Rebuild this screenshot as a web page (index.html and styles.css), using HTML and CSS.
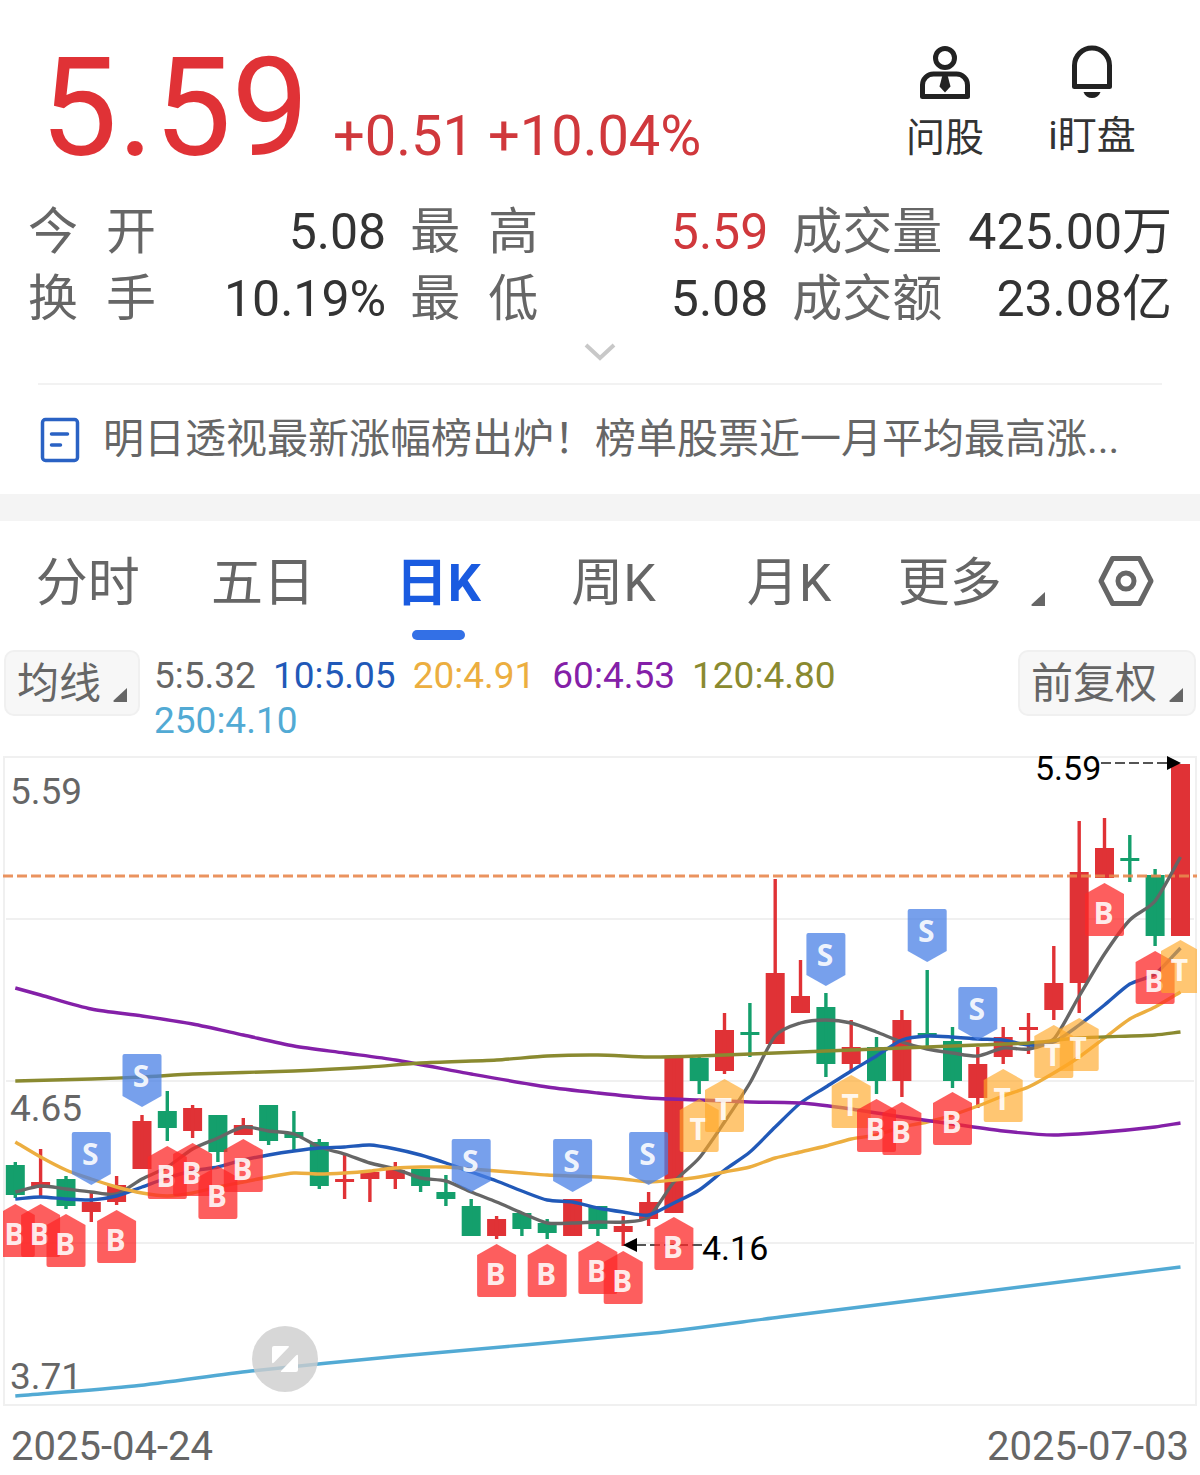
FILE: index.html
```html
<!DOCTYPE html>
<html lang="zh-CN">
<head>
    <meta charset="UTF-8">
    <meta name="viewport" content="width=device-width, initial-scale=1.0">
    <title>日K</title>
    <link rel="stylesheet" href="styles.css">
</head>
<body>
    <header class="header">
        <div class="quote">
            <span class="price">5.59</span>
            <span class="change">+0.51 +10.04%</span>
        </div>
        <div class="actions">
            <button type="button" class="action">
                <svg width="52" height="56" viewBox="0 0 52 56" fill="none" stroke="#222" stroke-width="5">
                    <circle cx="26" cy="13" r="9.5"/>
                    <path d="M3.5 51.5V40a11 11 0 0 1 11-11h23a11 11 0 0 1 11 11v11.5z" stroke-linejoin="round"/>
                    <path d="M23.5 30h5l3 11.5-5.5 6-5.5-6z" fill="#222" stroke="none"/>
                </svg>
                <span>问股</span>
            </button>
            <button type="button" class="action">
                <svg width="52" height="54" viewBox="0 0 52 54" fill="none" stroke="#222" stroke-width="5">
                    <path d="M8.5 41.5V20.5a17.5 17.5 0 0 1 35 0v21z" stroke-linejoin="round"/>
                    <path d="M17.5 47h17c-1.5 4-4.5 6-8.5 6s-7-2-8.5-6z" fill="#222" stroke="none"/>
                </svg>
                <span>i盯盘</span>
            </button>
        </div>
    </header>

    <dl class="stats">
        <div class="stat"><dt class="spread">今 开</dt><dd>5.08</dd></div>
        <div class="stat"><dt class="spread">最 高</dt><dd class="up">5.59</dd></div>
        <div class="stat"><dt>成交量</dt><dd>425.00万</dd></div>
        <div class="stat"><dt class="spread">换 手</dt><dd>10.19%</dd></div>
        <div class="stat"><dt class="spread">最 低</dt><dd>5.08</dd></div>
        <div class="stat"><dt>成交额</dt><dd>23.08亿</dd></div>
    </dl>
    <button type="button" class="more-stats" aria-label="展开">
        <svg width="32" height="18" viewBox="0 0 32 18" fill="none" stroke="#c8c8c8" stroke-width="4">
            <path d="M2 2l14 13L30 2"/>
        </svg>
    </button>

    <a href="#" class="news">
        <svg width="40" height="46" viewBox="0 0 40 46" fill="none" stroke="#2a62c4" stroke-width="3.5">
            <rect x="2.5" y="2.5" width="35" height="41" rx="3"/>
            <path d="M11.5 17h16M11.5 28h9" stroke-linecap="round"/>
        </svg>
        <span class="news-text">明日透视最新涨幅榜出炉！榜单股票近一月平均最高涨...</span>
    </a>

    <nav class="tabs">
        <button type="button" class="tab">分时</button>
        <button type="button" class="tab">五日</button>
        <button type="button" class="tab active">日K</button>
        <button type="button" class="tab">周K</button>
        <button type="button" class="tab">月K</button>
        <button type="button" class="tab tab-more">更多 <svg class="corner" viewBox="0 0 14 14"><path d="M14 0v14H1.500Q0 14 .5 12.500z" fill="#666"/></svg></button>
        <button type="button" class="settings" aria-label="设置">
            <svg width="56" height="52" viewBox="0 0 56 52" fill="none" stroke="#666" stroke-width="5">
                <path d="M14.5 3.5h27L53 26 41.5 48.5h-27L3 26z" stroke-linejoin="round"/>
                <circle cx="28" cy="26" r="8"/>
            </svg>
        </button>
    </nav>

    <div class="toolbar">
        <button type="button" class="pill">均线<svg class="corner" viewBox="0 0 14 14"><path d="M14 0v14H1.500Q0 14 .5 12.500z" fill="#666"/></svg></button>
        <div class="legend">
            <span class="ma5">5:5.32</span>
            <span class="ma10">10:5.05</span>
            <span class="ma20">20:4.91</span>
            <span class="ma60">60:4.53</span>
            <span class="ma120">120:4.80</span>
            <span class="ma250">250:4.10</span>
        </div>
        <button type="button" class="pill">前复权<svg class="corner" viewBox="0 0 14 14"><path d="M14 0v14H1.500Q0 14 .5 12.500z" fill="#666"/></svg></button>
    </div>

    <main class="chart">
        <svg id="kline" class="kline" viewBox="0 745 1200 670"></svg>
        <button type="button" class="expand" aria-label="横屏">
            <svg width="28" height="28" viewBox="0 0 28 28" fill="#fff">
                <path d="M3 1h14q2 0 .5 1.500L3 17.500q-2 1.500-2-.5V3q0-2 2-2z"/>
                <path d="M25 27H11q-2 0-.5-1.500L25 10.500q2-1.500 2 .5v14q0 2-2 2z"/>
            </svg>
        </button>
    </main>
    <footer class="dates">
        <span>2025-04-24</span>
        <span>2025-07-03</span>
    </footer>

    <script src="script.js"></script>
</body>
</html>
```
FILE: styles.css
```css
* {
    margin: 0;
    padding: 0;
    box-sizing: border-box;
}

body {
    background-color: #fff;
    color: #333;
    font-family: Roboto, "Noto Sans CJK SC", sans-serif;
}

button {
    background: none;
    border: none;
    color: inherit;
    font-family: inherit;
    cursor: pointer;
}

svg {
    display: block;
}

.header {
    display: flex;
    justify-content: space-between;
    padding: 40px 63px 23px 40px;
}

.quote {
    display: flex;
    align-items: baseline;
    gap: 24px;
    color: #e03236;
}

.price {
    font-size: 138px;
    line-height: 136px;
}

.change {
    font-size: 56px;
    color: #d0383c;
}

.actions {
    display: flex;
    align-items: flex-start;
    gap: 57px;
    padding-top: 5px;
}

.action {
    display: flex;
    flex-direction: column;
    align-items: center;
    min-width: 90px;
    font-size: 39px;
    line-height: 74px;
}

.stats {
    display: grid;
    grid-template-columns: 1fr 1fr auto;
    column-gap: 24px;
    padding: 0 28px;
    font-size: 50px;
    line-height: 67px;
}

.stat {
    display: flex;
    justify-content: space-between;
    gap: 26px;
}

.stat dt {
    color: #666;
}

.spread {
    width: 128px;
    text-align-last: justify;
}

.up {
    color: #d0383c;
}

.more-stats {
    display: block;
    margin: 0 auto;
    padding: 10px 20px 22px;
}

.news {
    display: flex;
    align-items: center;
    gap: 23px;
    height: 111px;
    margin: 0 38px;
    padding: 0 2px;
    border-top: 2px solid #f2f2f2;
    color: #666;
    font-size: 41px;
    text-decoration: none;
}

.news svg {
    flex: none;
}

.news-text {
    overflow: hidden;
    padding-bottom: 10px;
    white-space: nowrap;
}

.tabs {
    display: flex;
    padding: 23px 0 10px;
    border-top: 27px solid #f4f4f4;
    color: #666;
}

.tab {
    width: calc((100% - 148px) / 6);
    font-size: 52px;
    line-height: 80px;
}

.tab::after {
    content: "";
    display: block;
    width: 53px;
    height: 10px;
    margin: 6px auto 0;
    border-radius: 5px;
}

.tab.active {
    color: #1a5be0;
    font-weight: 700;
}

.tab.active::after {
    background-color: #3370e6;
}

.corner {
    display: inline-block;
    width: 14px;
    height: 14px;
}

.tab-more {
    padding-left: 14px;
    white-space: nowrap;
}

.tab-more .corner {
    margin-left: 16px;
    vertical-align: -5px;
}

.settings {
    display: flex;
    justify-content: center;
    width: 148px;
    padding-top: 11px;
}

.toolbar {
    display: flex;
    align-items: flex-start;
    padding: 0 4px 2px;
}

.pill {
    flex: none;
    height: 66px;
    padding: 0 11px;
    border: 2px solid #f0f0f0;
    border-radius: 10px;
    background-color: #f7f7f7;
    color: #666;
    font-size: 42px;
    line-height: 64px;
}

.pill .corner {
    margin-left: 12px;
    vertical-align: -4px;
}

.legend {
    flex: 1;
    display: flex;
    flex-wrap: wrap;
    column-gap: 17px;
    padding: 3px 60px 0 14px;
    font-size: 37px;
    line-height: 45px;
}

.ma5 { color: #666; }
.ma10 { color: #2159b8; }
.ma20 { color: #ecae40; }
.ma60 { color: #8420a8; }
.ma120 { color: #8a8a30; }
.ma250 { color: #52aad4; }

.chart {
    position: relative;
}

.kline {
    width: 100%;
}

.axis {
    fill: #666;
    font-size: 37px;
}

.mark {
    font-size: 34px;
    fill: #000;
}

.badge-text {
    fill: #fff;
    fill-opacity: 0.9;
    font-family: "Open Sans", sans-serif;
    font-size: 30px;
    font-weight: 700;
    text-anchor: middle;
}

.expand {
    position: absolute;
    left: 21%;
    bottom: 23px;
    display: flex;
    align-items: center;
    justify-content: center;
    width: 66px;
    height: 66px;
    border-radius: 50%;
    background-color: rgba(205, 205, 205, 0.8);
}

.dates {
    display: flex;
    justify-content: space-between;
    padding: 4px 11px 0;
    color: #666;
    font-size: 40px;
    line-height: 56px;
}
```
FILE: script.js
```js
const svg = document.getElementById('kline');
const STEP = 25.33;
const RED = '#e03236';
const GREEN = '#149f6c';

// [color, body top, body bottom, high, low]
const candles = [
    ['g', 1165, 1195, 1162, 1198], ['r', 1182, 1188, 1149, 1198], ['g', 1179, 1206, 1176, 1209],
    ['r', 1202, 1212, 1193, 1222], ['r', 1185, 1202, 1176, 1205], ['r', 1121, 1169, 1115, 1169],
    ['g', 1111, 1128, 1091, 1141], ['r', 1108, 1131, 1105, 1138], ['g', 1115, 1152, 1115, 1162],
    ['r', 1125, 1135, 1118, 1135], ['g', 1105, 1141, 1105, 1145], ['g', 1132, 1138, 1111, 1150],
    ['g', 1142, 1186, 1139, 1189], ['r', 1179, 1182, 1153, 1199], ['r', 1172, 1179, 1170, 1202],
    ['r', 1170, 1179, 1162, 1189], ['g', 1169, 1186, 1169, 1192], ['g', 1192, 1199, 1175, 1206],
    ['g', 1206, 1236, 1199, 1236], ['r', 1219, 1236, 1216, 1239], ['g', 1213, 1229, 1213, 1236],
    ['g', 1223, 1233, 1219, 1239], ['r', 1199, 1236, 1199, 1236], ['g', 1206, 1229, 1206, 1236],
    ['r', 1226, 1232, 1216, 1246], ['r', 1202, 1219, 1192, 1226], ['r', 1058, 1213, 1058, 1213],
    ['g', 1058, 1081, 1055, 1094], ['r', 1030, 1071, 1013, 1074], ['g', 1032, 1035, 1003, 1057],
    ['r', 973, 1044, 879, 1044], ['r', 996, 1013, 960, 1013], ['g', 1007, 1064, 993, 1077],
    ['r', 1047, 1064, 1020, 1071], ['g', 1047, 1081, 1037, 1094], ['r', 1020, 1081, 1010, 1097],
    ['g', 1033, 1036, 970, 1046], ['g', 1041, 1081, 1027, 1088], ['r', 1064, 1098, 1047, 1108],
    ['r', 1037, 1057, 1027, 1064], ['r', 1027, 1030, 1013, 1054], ['r', 983, 1010, 946, 1020],
    ['r', 872, 983, 821, 1013], ['r', 848, 878, 818, 878], ['g', 858, 861, 835, 882],
    ['g', 875, 936, 869, 946], ['r', 764, 936, 764, 936]
];

const ma250 = [[0, 1396], [4.7, 1386], [9.3, 1371], [15.2, 1356], [25.2, 1333], [30.2, 1317], [46, 1267]];
const ma120 = [[0, 1081], [3, 1079], [5, 1077], [7, 1074], [11, 1071], [14, 1067], [16, 1063], [19, 1060], [21, 1056],
    [23, 1055], [25, 1057], [27, 1056], [30, 1053], [32, 1051], [35, 1048], [38, 1045], [40, 1043], [42, 1038], [45, 1035], [46, 1032]];
const ma60 = [[0, 988], [1, 995], [3, 1009], [5, 1016], [7, 1024], [9, 1035], [11, 1046], [13, 1053], [15, 1060], [18, 1074],
    [21, 1087], [23, 1093], [25, 1098], [27, 1100], [29, 1102], [31, 1103], [33, 1109], [35, 1117], [37, 1124], [39, 1131],
    [41, 1135], [43, 1132], [45, 1127], [46, 1123]];
const ma20 = [1142, 1157, 1170, 1179, 1187, 1193, 1196, 1193, 1187, 1182, 1177, 1173, 1174, 1173, 1171, 1168, 1167, 1167,
    1169, 1171, 1173, 1175, 1176, 1177, 1179, 1182, 1180, 1177, 1172, 1167, 1158, 1152, 1146, 1139, 1135, 1127, 1122, 1115,
    1106, 1096, 1087, 1073, 1057, 1038, 1019, 1007, 992];
const ma10 = [1199, 1197, 1199, 1200, 1196, 1187, 1178, 1171, 1167, 1160, 1155, 1151, 1148, 1147, 1145, 1149, 1155, 1163,
    1172, 1181, 1191, 1200, 1202, 1208, 1212, 1215, 1203, 1190, 1170, 1152, 1127, 1103, 1087, 1071, 1056, 1040, 1036, 1037,
    1039, 1040, 1045, 1042, 1025, 1005, 984, 974, 948];
const ma5 = [1192, 1186, 1189, 1192, 1194, 1179, 1167, 1149, 1138, 1127, 1131, 1134, 1147, 1154, 1163, 1169, 1178, 1181,
    1192, 1202, 1213, 1223, 1223, 1222, 1222, 1217, 1182, 1158, 1122, 1083, 1036, 1023, 1020, 1023, 1032, 1042, 1049, 1053,
    1056, 1048, 1049, 1039, 996, 954, 920, 901, 857];

// [type, candle index, top]
const badges = [
    ['B', 0, 1204], ['B', 1, 1204], ['B', 2, 1214], ['S', 3, 1132], ['B', 4, 1210], ['S', 5, 1054],
    ['B', 6, 1146], ['B', 7, 1143], ['B', 8, 1166], ['B', 9, 1139], ['S', 18, 1139], ['B', 19, 1244],
    ['B', 21, 1244], ['S', 22, 1139], ['B', 23, 1241], ['B', 24, 1251], ['S', 25, 1132], ['B', 26, 1217],
    ['T', 27, 1099], ['T', 28, 1079], ['S', 32, 933], ['T', 33, 1075], ['B', 34, 1099], ['B', 35, 1102],
    ['S', 36, 909], ['B', 37, 1092], ['S', 38, 987], ['T', 39, 1069], ['T', 41, 1025], ['T', 42, 1018],
    ['B', 43, 883], ['B', 45, 951], ['T', 46, 940]
];
const badgeColors = { B: '#fc2828', S: '#4a80e6', T: '#ffa726' };

function x(i) {
    return Math.round((15.3 + STEP * i) * 10) / 10;
}

function line(points, color) {
    const d = points.map((p, i) => Array.isArray(p) ? [x(p[0]), p[1]] : [x(i), p]);
    // smooth the joints a little by curving through the points
    let path = `M${d[0]}`;
    for (let i = 0; i < d.length - 1; i++) {
        const a = d[i - 1] || d[i], b = d[i], c = d[i + 1], e = d[i + 2] || c;
        const k = (c[0] - b[0]) / 4;
        const s1 = a === b ? (c[1] - b[1]) / (c[0] - b[0]) : (c[1] - a[1]) / (c[0] - a[0]);
        const s2 = e === c ? (c[1] - b[1]) / (c[0] - b[0]) : (e[1] - b[1]) / (e[0] - b[0]);
        path += `C${b[0] + k},${b[1] + s1 * k} ${c[0] - k},${c[1] - s2 * k} ${c}`;
    }
    return `<path d="${path}" fill="none" stroke="${color}" stroke-width="3.4"/>`;
}

let out = '<clipPath id="frame"><rect x="3" y="745" width="1194" height="665"/></clipPath>';

out += '<g stroke="#f0f0f0" stroke-width="2" fill="none"><rect x="4" y="757" width="1192" height="648"/>';
[919, 1081, 1243].forEach(y => {
    out += `<path d="M6 ${y}H1194"/>`;
});
out += '</g>';
out += '<text class="axis" x="10" y="804">5.59</text><text class="axis" x="10" y="1121">4.65</text><text class="axis" x="10" y="1389">3.71</text>';

out += '<g clip-path="url(#frame)">';
candles.forEach(([color, top, bottom, high, low], i) => {
    const fill = color === 'r' ? RED : GREEN;
    out += `<rect x="${x(i) - 9.5}" y="${top}" width="19" height="${bottom - top}" fill="${fill}"/>`;
    out += `<rect x="${x(i) - 1.7}" y="${high}" width="3.4" height="${low - high}" fill="${fill}"/>`;
});
out += '<path d="M3 876H1197" stroke="#e8874e" stroke-opacity="0.9" stroke-width="3" stroke-dasharray="10 4"/>';
out += line(ma5, '#666') + line(ma10, '#2159b8') + line(ma20, '#ecae40');
out += line(ma60, '#8420a8') + line(ma120, '#8a8a30') + line(ma250, '#52aad4');
out += '<path d="M1101 763H1168M702 1245H636" stroke="#555" stroke-width="2" stroke-dasharray="10 4"/>';
out += '<path d="M1167 756l14 7-14 7zM637 1238l-14 7 14 7z"/>';

badges.forEach(([type, i, top]) => {
    const cx = x(i);
    const shape = type === 'S'
        ? `M${cx - 17.5} ${top}h35q2 0 2 2v40l-19.5 11-19.5-11v-40q0-2 2-2z`
        : `M${cx} ${top}l19.5 11v40q0 2-2 2h-35q-2 0-2-2v-40z`;
    out += `<path d="${shape}" fill="${badgeColors[type]}" fill-opacity="${type === 'T' ? 0.65 : 0.75}"/>`;
    out += `<text class="badge-text" x="${cx - 1}" y="${top + (type === 'S' ? 33 : 41)}">${type}</text>`;
});
out += '</g>';
out += '<text class="mark" x="1035" y="780">5.59</text><text class="mark" x="702" y="1260">4.16</text>';

svg.innerHTML = out;
```
